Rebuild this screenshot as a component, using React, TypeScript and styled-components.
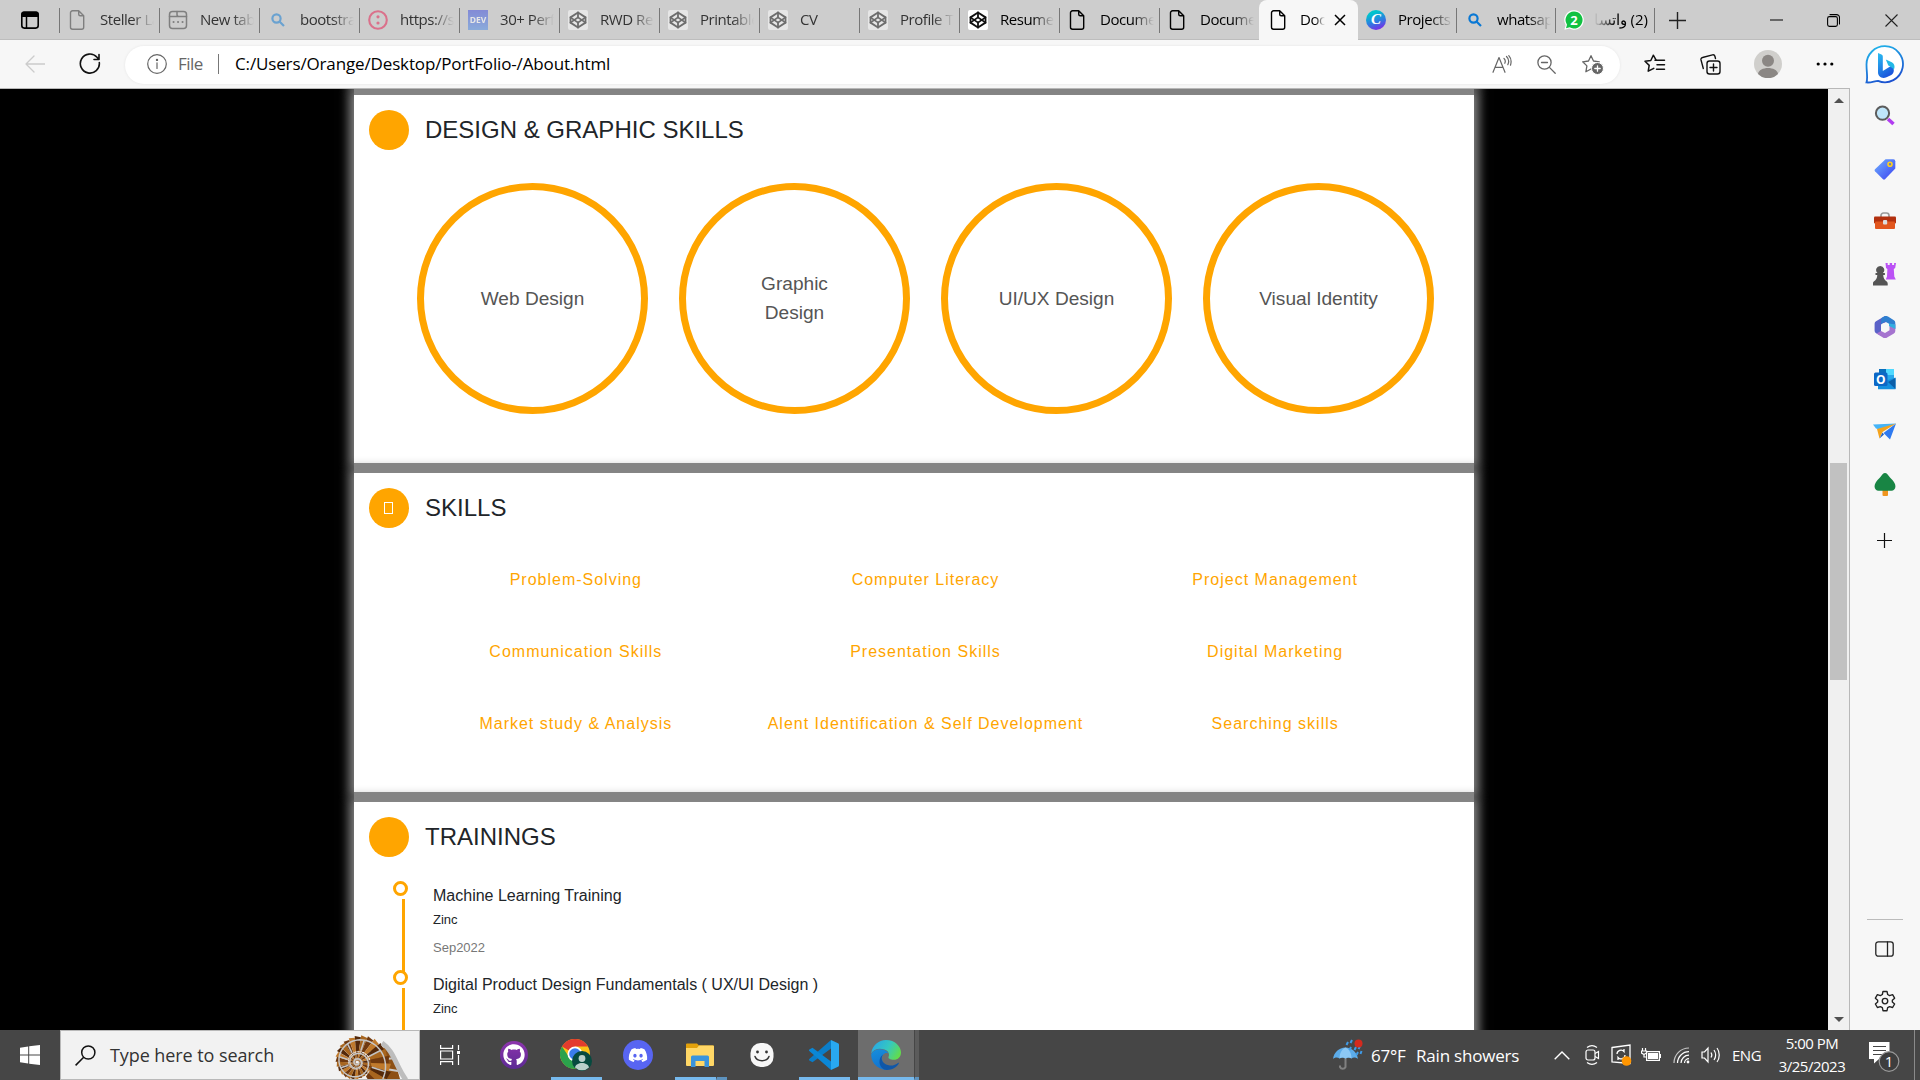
import React from "react";
import styled, { createGlobalStyle } from "styled-components";
import { Codepen } from "lucide-react";
import { FaGithub, FaDiscord } from "react-icons/fa";

const UI = `"Open Sans", "Noto Sans", sans-serif`;
const ORANGE = "#ffa500";

const Global = createGlobalStyle`
  *, *::before, *::after { box-sizing: border-box; }
  html, body { margin: 0; padding: 0; overflow: hidden; }
  body { font-family: "Liberation Sans", Arial, sans-serif; background: #000; }
  svg { display: block; flex: none; }
`;

const Screen = styled.div`
  width: 1920px;
  height: 1080px;
  display: flex;
  flex-direction: column;
  overflow: hidden;
`;

/* ---------- tab strip ---------- */
const TabStrip = styled.div`
  height: 40px;
  flex: none;
  display: flex;
  background: #cdcdcd;
  box-shadow: inset 0 -1px 0 #bdbdbd;
  font-family: ${UI};
`;
const StripLead = styled.div`
  width: 60px;
  padding-left: 20px;
  display: flex;
  align-items: center;
  border-right: 1px solid transparent;
`;
const TabBox = styled.div<{ $w: number; $active?: boolean; $dim?: boolean; $bar: boolean }>`
  width: ${(p) => p.$w}px;
  flex: none;
  display: flex;
  align-items: center;
  margin-left: ${(p) => (p.$active ? -1 : 0)}px;
  padding-left: ${(p) => (p.$active ? 10 : 8)}px;
  position: relative;
  background: ${(p) => (p.$active ? "#f7f7f7" : "transparent")};
  border-radius: 8px 8px 0 0;
  color: ${(p) => (p.$dim ? "#333" : "#000")};
  &::before {
    content: "";
    display: ${(p) => (p.$bar ? "block" : "none")};
    position: absolute;
    left: -1px;
    top: 8px;
    width: 1px;
    height: 25px;
    background: #777;
  }
`;
const Fav = styled.span<{ $dim?: boolean }>`
  width: 20px;
  height: 20px;
  flex: none;
  display: flex;
  align-items: center;
  justify-content: center;
  opacity: ${(p) => (p.$dim ? 0.5 : 1)};
`;
const TabTitle = styled.span<{ $w: number; $rtl?: boolean; $gap?: number }>`
  width: ${(p) => p.$w}px;
  margin-left: ${(p) => p.$gap ?? 12}px;
  padding-bottom: 2px;
  flex: none;
  overflow: hidden;
  white-space: nowrap;
  font-size: 15px;
  line-height: 22px;
  letter-spacing: -0.45px;
  direction: ${(p) => (p.$rtl ? "rtl" : "ltr")};
  mask-image: linear-gradient(to ${(p) => (p.$rtl ? "left" : "right")}, #000 60%, transparent 100%);
`;
const PenTile = styled.span`
  width: 20px;
  height: 20px;
  display: flex;
  align-items: center;
  justify-content: center;
  background: #fff;
  border-radius: 2px;
`;
const DevTile = styled.span`
  width: 20px;
  height: 20px;
  background: linear-gradient(#3b49df, #4a8ae8);
  color: #fff;
  font: 700 8.5px/20px ${UI};
  text-align: center;
`;
const CanvaTile = styled.span`
  width: 20px;
  height: 20px;
  border-radius: 50%;
  background: linear-gradient(160deg, #00c4cc 20%, #2b7fe0 55%, #7d2ae8 90%);
  color: #fff;
  font: italic 700 15px/19px "Liberation Serif", serif;
  text-align: center;
`;
const WindowTools = styled.div`
  margin-left: auto;
  display: flex;
  align-items: center;
`;
const Slot = styled.div<{ $w: number }>`
  width: ${(p) => p.$w}px;
  flex: none;
  display: flex;
  align-items: center;
  justify-content: center;
`;

/* ---------- toolbar ---------- */
const Toolbar = styled.div`
  height: 48px;
  flex: none;
  display: flex;
  align-items: center;
  background: #f7f7f7;
  font-family: ${UI};
`;
const Address = styled.div`
  width: 1495px;
  height: 38px;
  margin: 1px 0 0 8px;
  border-radius: 19px;
  background: #fff;
  box-shadow: 0 0 3px rgba(0, 0, 0, 0.08);
  display: flex;
  align-items: center;
  padding: 0 0 1px 22px;
`;
const Scheme = styled.span`
  width: 40px;
  margin-left: 11px;
  padding-bottom: 2px;
  font-size: 17px;
  letter-spacing: -0.5px;
  color: #666;
`;
const Divider = styled.span`
  width: 1px;
  height: 20px;
  background: #777;
`;
const Url = styled.span`
  margin-left: 16px;
  padding-bottom: 2px;
  font-size: 17px;
  letter-spacing: -0.14px;
  color: #000;
  white-space: nowrap;
`;
const AddressTools = styled.div`
  margin-left: auto;
  padding-right: 5px;
  display: flex;
`;
const BingSlot = styled.div`
  margin-left: auto;
  padding: 2px 16px 0 0;
`;

/* ---------- body ---------- */
const Middle = styled.div`
  height: 942px;
  flex: none;
  display: flex;
`;
const PageFrame = styled.div`
  width: 1850px;
  display: flex;
  border-top: 1px solid #b8b8b8;
  border-right: 1px solid #b8b8b8;
`;
const Page = styled.main`
  width: 1828px;
  height: 941px;
  overflow: hidden;
  background: #000;
  color: #212529;
`;
const Column = styled.div`
  width: 1120px;
  margin: -44px 0 0 354px;
  display: flex;
  flex-direction: column;
  gap: 10px;
  background: #808080;
`;
const Card = styled.section<{ $h: number }>`
  height: ${(p) => p.$h}px;
  flex: none;
  padding: 15px;
  background: #fff;
  box-shadow: 0 0 10px 5px #868686;
`;
const CardHead = styled.header`
  display: flex;
  align-items: center;
  gap: 16px;
  height: 40px;
`;
const Bullet = styled.span`
  width: 40px;
  height: 40px;
  border-radius: 50%;
  background: ${ORANGE};
  display: flex;
  align-items: center;
  justify-content: center;
`;
const MissingGlyph = styled.i`
  width: 9px;
  height: 12px;
  margin-right: 1px;
  border: 1px solid #fff;
`;
const Title = styled.h2`
  margin: 0;
  font-size: 24px;
  font-weight: 400;
  line-height: 40px;
`;
const Rings = styled.div`
  display: flex;
  gap: 31px;
  margin: 33px 0 0 48px;
`;
const Ring = styled.div`
  width: 231px;
  height: 231px;
  border: 7.5px solid ${ORANGE};
  border-radius: 50%;
  display: flex;
  align-items: center;
  justify-content: center;
  padding: 0 47px 1px;
  text-align: center;
  font-size: 19.1px;
  line-height: 29px;
  color: #555;
`;
const SkillGrid = styled.div`
  width: 1049px;
  margin: 16px 0 0 32px;
  display: grid;
  grid-template-columns: repeat(3, 1fr);
  grid-auto-rows: 72px;
`;
const Skill = styled.div`
  display: flex;
  align-items: center;
  justify-content: center;
  font-size: 16px;
  letter-spacing: 1px;
  color: ${ORANGE};
`;
const Timeline = styled.div`
  margin: 24px 0 0 24px;
`;
const Entry = styled.article`
  height: 89px;
  display: flex;
`;
const Rail = styled.div`
  width: 15px;
  display: flex;
  flex-direction: column;
`;
const Dot = styled.span`
  width: 15px;
  height: 15px;
  flex: none;
  border: 3px solid ${ORANGE};
  border-radius: 50%;
`;
const Line = styled.span`
  width: 3px;
  height: 73px;
  margin: 3px 0 0 9px;
  flex: none;
  background: ${ORANGE};
`;
const EntryText = styled.div`
  margin-left: 25px;
  padding-top: 5px;
`;
const EntryTitle = styled.h3`
  margin: 0;
  font-size: 16px;
  font-weight: 400;
  line-height: 20px;
`;
const EntryOrg = styled.p`
  margin: 4px 0 0;
  font-size: 13px;
  line-height: 20px;
`;
const EntryDate = styled.p`
  margin: 8px 0 0;
  font-size: 13px;
  line-height: 20px;
  color: #777;
`;

const Scrollbar = styled.div`
  width: 21px;
  display: flex;
  flex-direction: column;
  align-items: center;
  background: #f0f0f0;
`;
const Arrow = styled.i<{ $down?: boolean }>`
  width: 0;
  height: 0;
  margin-top: ${(p) => (p.$down ? "auto" : "9px")};
  margin-bottom: ${(p) => (p.$down ? "8px" : "0")};
  border: 5px solid transparent;
  border-top: ${(p) => (p.$down ? "5px solid #505050" : "none")};
  border-bottom: ${(p) => (p.$down ? "none" : "5px solid #505050")};
`;
const Thumb = styled.i`
  width: 17px;
  height: 217px;
  margin-top: 360px;
  background: #c1c1c1;
`;
const Sidebar = styled.aside`
  width: 70px;
  background: #f7f7f7;
  display: flex;
  flex-direction: column;
  align-items: center;
  padding: 2px 1px 0 0;
`;
const SideItem = styled.div<{ $h?: number }>`
  height: ${(p) => p.$h ?? 52.6}px;
  flex: none;
  display: flex;
  align-items: center;
`;
const SideRule = styled.hr`
  width: 36px;
  height: 1px;
  margin: auto 0 3px;
  border: 0;
  background: #bbb;
`;

/* ---------- taskbar ---------- */
const Taskbar = styled.footer`
  height: 50px;
  flex: none;
  display: flex;
  background: #464646;
  color: #fff;
  font-family: ${UI};
`;
const SearchBox = styled.div`
  width: 360px;
  display: flex;
  align-items: center;
  padding-left: 14px;
  background: #f2f2f2;
  border: 1px solid #b9b9b9;
  color: #333;
  overflow: hidden;
`;
const SearchText = styled.span`
  width: 165px;
  margin-left: 14px;
  font-size: 18px;
  letter-spacing: -0.08px;
  white-space: nowrap;
`;
const Shell = styled.div`
  margin-left: 57px;
  align-self: flex-start;
`;
const AppSlot = styled.div<{ $shift?: number }>`
  width: 62px;
  margin-left: ${(p) => p.$shift ?? 0}px;
  display: flex;
  justify-content: center;
  align-items: stretch;
`;
const AppInner = styled.div<{ $running?: boolean; $active?: boolean; $wide?: number }>`
  width: ${(p) => (p.$active ? 56 : 51)}px;
  display: flex;
  align-items: center;
  justify-content: center;
  background: ${(p) => (p.$active ? "#6d6d6d" : "transparent")};
  border-bottom: 3px solid ${(p) => (p.$running ? "#76b9ed" : "transparent")};
  padding-top: 3px;
`;
/* Sliver beside an app that has more than one window open. */
const Stack = styled.div<{ $bg: string; $over: number; $out: number }>`
  width: ${(p) => p.$over + p.$out}px;
  margin: 0 ${(p) => -p.$out}px 0 ${(p) => -p.$over}px;
  background: ${(p) => p.$bg};
  border-left: 1px solid #464646;
  border-bottom: 3px solid #5d93bf;
`;
const Disc = styled.span<{ $c: string; $s: number }>`
  width: ${(p) => p.$s}px;
  height: ${(p) => p.$s}px;
  border-radius: 50%;
  background: ${(p) => p.$c};
  display: flex;
  align-items: center;
  justify-content: center;
`;
const Tray = styled.div`
  margin-left: auto;
  display: flex;
  align-items: center;
`;
const Weather = styled.div`
  width: 214px;
  display: flex;
  align-items: center;
  font-size: 17px;
  letter-spacing: -0.2px;
  white-space: nowrap;
`;
const Degrees = styled.span`
  width: 45px;
  margin-left: 8px;
`;
const Lang = styled.span`
  width: 46px;
  padding-left: 6px;
  font-size: 15px;
  letter-spacing: -0.5px;
`;
const Clock = styled.div`
  width: 80px;
  text-align: center;
  font-size: 15px;
  line-height: 23px;
  letter-spacing: -0.5px;
  padding-bottom: 1px;
`;
const Notice = styled.div`
  width: 62px;
  padding-left: 17px;
`;
const DeskEdge = styled.span`
  width: 6px;
  height: 50px;
  border-left: 1px solid #8a8a8a;
`;

/* ---------- icons ---------- */
const line = { fill: "none", stroke: "currentColor", strokeLinecap: "round", strokeLinejoin: "round" } as const;

const DocIcon = () => (
  <svg width="20" height="20" viewBox="0 0 20 20" {...line} strokeWidth="1.4">
    <path d="M4.500 .8h6.200l5 5v11.400a2 2 0 0 1-2 2H4.500a2 2 0 0 1-2-2V2.800a2 2 0 0 1 2-2z M10.700 .8v3.500a1.500 1.500 0 0 0 1.500 1.500h3.500" />
  </svg>
);
const NewTabIcon = () => (
  <svg width="20" height="20" viewBox="0 0 20 20" {...line} strokeWidth="1.5">
    <rect x="1.500" y="1.500" width="17" height="17" rx="3" />
    <path d="M1.500 6.500h17M9 1.500v3a2 2 0 0 0 2 2" />
    <path d="M5.500 12h.1M10 12h.1M14.500 12h.1" strokeWidth="2" />
  </svg>
);
const BingSearch = ({ c }: { c: string }) => (
  <svg width="14" height="14" viewBox="0 0 14 14" fill="none" stroke={c} strokeWidth="2.200">
    <circle cx="5.500" cy="5.500" r="4.100" />
    <path d="M8.500 8.500l4.500 4.500" />
  </svg>
);
const RedRing = () => (
  <svg width="20" height="20" viewBox="0 0 20 20">
    <circle cx="10" cy="10" r="8.800" fill="none" stroke="#e8174b" strokeWidth="2.100" />
    <circle cx="10" cy="6.800" r="1.600" fill="#e8174b" />
    <circle cx="10" cy="13" r="1.600" fill="#e8174b" />
  </svg>
);
const Pen = () => (
  <PenTile>
    <Codepen size={18} strokeWidth={2.4} color="#111" />
  </PenTile>
);
const ChatBadge = () => (
  <svg width="20" height="20" viewBox="0 0 20 20">
    <path d="M10 .3a9.700 9.700 0 1 1-4.600 18.200L.4 19.800l1.300-4.800A9.700 9.700 0 0 1 10 .3z" fill="#fff" />
    <path d="M10 1.500a8.500 8.500 0 1 1-4.300 15.800L2 18.300l1-3.600A8.500 8.500 0 0 1 10 1.500z" fill="#11c142" />
    <text x="10" y="15" textAnchor="middle" fontFamily="Open Sans, sans-serif" fontWeight="700" fontSize="13" fill="#fff">2</text>
  </svg>
);
const Star = "M10 1.700l2.500 5.300 5.800.8-4.200 4.100 1 5.800L10 15l-5.100 2.700 1-5.800L1.700 7.800l5.800-.8z";

const SideSearch = () => (
  <svg width="22" height="22" viewBox="0 0 22 22">
    <path d="M14 14l5.500 5" stroke="#b13cf0" strokeWidth="3.600" />
    <circle cx="8.500" cy="8.200" r="6.600" fill="#bfe6fb" stroke="#5c5c5c" strokeWidth="2" />
  </svg>
);
const SideTag = () => (
  <svg width="22" height="22" viewBox="0 0 22 22">
    <defs><linearGradient id="tag" x1="0" y1="0" x2="1" y2="1"><stop stopColor="#6fb1ff" /><stop offset="1" stopColor="#3b3ff0" /></linearGradient></defs>
    <path d="M11.500 1.200h7.800a2 2 0 0 1 2 2v7.300L11 21.200a1.500 1.500 0 0 1-2 0L1 13.200a1.500 1.500 0 0 1 0-2z" fill="url(#tag)" />
    <circle cx="16" cy="6.300" r="2" fill="#6b7fb5" stroke="#ffcf1c" strokeWidth="1.600" />
  </svg>
);
const SideBox = () => (
  <svg width="22" height="20" viewBox="0 0 22 20">
    <path d="M7 6V4.500A2.500 2.500 0 0 1 9.500 2h3A2.500 2.500 0 0 1 15 4.500V6" fill="none" stroke="#999" strokeWidth="1.700" />
    <rect y="5.500" width="22" height="7" rx="1" fill="#b2300e" />
    <rect x="1" y="10.500" width="20" height="7.500" rx="1" fill="#e2561d" />
    <rect x="9" y="9" width="4.200" height="4.500" rx="1" fill="#ddd" />
  </svg>
);
const SideChess = () => (
  <svg width="23" height="23" viewBox="0 0 23 23">
    <path d="M12.500 0h2.200v2h2V0h2.400v2h2V0H23l-.8 5-1.400 1 .5 7.500 1.500 3h-10l1.200-3 .4-7.500-1.400-1z" fill="#bb52f5" />
    <path d="M7.200 3a4 4 0 0 1 2.700 7h2v2h-1.700c.2 3 1.200 5 3.500 6.500.9.600 1.300 2.500.9 4H0c-.5-1.500 0-3.400.8-4C3.200 17 4.200 15 4.300 12H2.500v-2h2a4 4 0 0 1 2.700-7z" fill="#555" />
  </svg>
);
const SideM365 = () => (
  <svg width="22" height="22" viewBox="0 0 22 22">
    <path d="M11 0l-9 5.200A3 3 0 0 0 .6 7.700v7a3 3 0 0 0 1.500 2.500L7 19.800V8.500L14 5z" fill="#5a62c8" />
    <path d="M11 0c1-.3 2 0 3 .6l5.900 3.700a3 3 0 0 1 1.400 2.500v6L15 9.500V7.800L11 5.500 7 8 7.500 2z" fill="#2f7fd0" />
    <path d="M21.300 8v7a3 3 0 0 1-1.400 2.400l-7.200 4.300a3.300 3.300 0 0 1-3.400 0L2.500 17.500 7 15l4 2 4.500-2.700V10z" fill="#a574cf" />
    <path d="M15 7.500l6.300 1v4.500L15 10z" fill="#31aee0" />
    <circle cx="11" cy="11" r="4" fill="#f7f7f7" />
  </svg>
);
const SideOutlook = () => (
  <svg width="22" height="22" viewBox="0 0 22 22">
    <path d="M5 1h15v18H5z" fill="#28a8ea" />
    <path d="M12 1h8v6h-8z" fill="#50d9ff" />
    <path d="M5 1h7v6H5z" fill="#0a6fbd" />
    <path d="M4 21.300V16l10-4 7.500-2.500v11.800z" fill="#1490df" />
    <path d="M21.500 10v11L14 14z" fill="#0b5ea8" />
    <rect y="4.500" width="13.500" height="13.500" rx="1.500" fill="#0c68c6" />
    <text x="6.700" y="15.500" textAnchor="middle" fontFamily="Open Sans, sans-serif" fontWeight="700" fontSize="12" fill="#fff">O</text>
  </svg>
);
const SidePlane = () => (
  <svg width="23" height="17" viewBox="0 0 23 17">
    <path d="M0 1.500L23 .5 10 7.500 3 5.500z" fill="#45b4f7" />
    <path d="M23 .5L10.500 10l6.500 6.500z" fill="#2f7af0" />
    <path d="M23 .5L4 6l2.500 9.500L9.500 9z" fill="#f5a31c" />
    <path d="M9.500 9.500L6.500 15.500l4.500-4z" fill="#1d5fc4" />
  </svg>
);
const SideTree = () => (
  <svg width="22" height="23" viewBox="0 0 22 23">
    <rect x="8.500" y="15" width="5.500" height="8" rx="1" fill="#f0951e" />
    <path d="M11 0c1.800 0 3 2 5 4.500 1.500 1.800 3.500 3.300 4.500 5.500 2.300 4.500 0 7.700-3 7.700H4.500c-3 0-5.300-3.200-3-7.700 1-2.200 3-3.700 4.500-5.500C8 2 9.200 0 11 0z" fill="#188544" />
  </svg>
);
const BingLogo = () => (
  <svg width="39" height="40" viewBox="0 0 39 40">
    <defs>
      <linearGradient id="bub" x1="0.2" y1="0" x2="0.6" y2="1"><stop stopColor="#21b5ea" /><stop offset="1" stopColor="#1b50cf" /></linearGradient>
      <linearGradient id="bb" x1="0" y1="0" x2="0.5" y2="1"><stop stopColor="#2ac0f2" /><stop offset="1" stopColor="#1a55dc" /></linearGradient>
    </defs>
    <path d="M20 1.200a18 18 0 1 1-7 34.600c-3.500 0-6.500 2.200-11.500 1.600C3 33.500 1.500 27 1.500 19.500A18.300 18.300 0 0 1 20 1.200z" fill="#fff" stroke="url(#bub)" strokeWidth="1.800" />
    <path d="M13 8l3.500 1.600a2 2 0 0 1 1.300 1.900V26l8.500-5.200c3.800 3 3 7.500 0 9.300L21.500 32.300c-4.500 2-8.500-.8-8.500-5z" fill="url(#bb)" />
    <path d="M20.800 14.500l6 2.800c3 1.700 3.300 5.200 2 7.200-1.500-2-3.500-3-5.500-4z" fill="#23b8e6" />
  </svg>
);

/* Spiral staircase drawn from wedges whose radius grows with the angle. */
const SpiralArt = () => {
  const cx = 25;
  const cy = 31.5;
  const radius = (a: number) => 2.1 * Math.pow(2.5, a / (2 * Math.PI));
  const at = (a: number, k = 1) => {
    const r = radius(a) * k;
    return `${(cx + r * Math.cos(a)).toFixed(2)},${(cy + r * Math.sin(a)).toFixed(2)}`;
  };
  const step = Math.PI / 13;
  const end = 6.3 * Math.PI;
  const shades = ["#a8661f", "#70390f", "#c07a2c", "#54290a"];
  const wedges = [];
  for (let a = 1, i = 0; a < end; a += step, i++) {
    wedges.push(
      <polygon key={i} fill={shades[i % 4]} points={`${at(a, 1.03)} ${at(a + step, 0.96)} ${at(a + step, 0.44)} ${at(a, 0.42)}`} />
    );
  }
  const rail = [];
  for (let a = 0; a < end + 0.3; a += 0.1) rail.push(at(a, 0.86));
  return (
    <svg width="82" height="48" viewBox="0 0 82 48">
      <path d="M40 12L60 20 68 48H36z" fill="#8d5015" />
      <path d="M44 29l20-2M42 36l24 4M37 40l12 8" stroke="#c9c9c9" strokeWidth="2.200" />
      {wedges}
      {[4.9, 5.1, 5.35, 5.6, 5.85, 6.1].map((k) => (
        <path key={k} d={`M${at(k * Math.PI, 0.45)} L${at(k * Math.PI, 0.86)}`} stroke="#c4c4c4" strokeWidth="1.500" />
      ))}
      <polyline points={rail.join(" ")} fill="none" stroke="#c6c6c6" strokeWidth="1.500" />
      <path d="M50 12C62 20 64 36 74 49" fill="none" stroke="#bdbdbd" strokeWidth="5" />
    </svg>
  );
};

const ChromeLogo = () => (
  <svg width="32" height="32" viewBox="0 0 32 32">
    <circle cx="15" cy="15" r="15" fill="#fbc116" />
    <path d="M15 15L2 7.500A15 15 0 0 1 28 7.500H15z" fill="#e33b2e" />
    <path d="M2 7.500A15 15 0 0 0 15 30l7-11.500L9 18z" fill="#2ba24c" />
    <circle cx="15" cy="15" r="7.500" fill="#fff" />
    <circle cx="15" cy="15" r="5.800" fill="#3a7cec" />
    <circle cx="22" cy="22" r="10" fill="#064a3f" />
    <circle cx="22" cy="19.500" r="3.400" fill="#b9d0cb" />
    <path d="M15 28.500c1-6 13-6 14 0a10 10 0 0 1-14 0z" fill="#b9d0cb" />
  </svg>
);
const FolderLogo = () => (
  <svg width="28" height="24" viewBox="0 0 28 24">
    <path d="M0 1.500A1 1 0 0 1 1 .5h10l2 2h14a1 1 0 0 1 1 1V8H0z" fill="#e3a10a" />
    <path d="M0 5h11l2-2.500h14a1 1 0 0 1 1 1V22a1 1 0 0 1-1 1H1a1 1 0 0 1-1-1z" fill="#ffd766" />
    <path d="M5 24V14a1.500 1.500 0 0 1 1.500-1.500h15A1.500 1.500 0 0 1 23 14v10h-4.500v-6h-9v6z" fill="#3a94dc" />
  </svg>
);
const SmileLogo = () => (
  <svg width="24" height="26" viewBox="0 0 24 26">
    <rect x=".5" y="1" width="23" height="24" rx="10" fill="#f7f7f7" />
    <circle cx="7.500" cy="10" r="1.400" fill="#333" />
    <circle cx="16.500" cy="10" r="1.400" fill="#333" />
    <path d="M5 14.500c2 5.500 12 5.500 14 0" fill="none" stroke="#333" strokeWidth="1.500" strokeLinecap="round" />
  </svg>
);
const CodeLogo = () => (
  <svg width="30" height="30" viewBox="0 0 30 30">
    <path d="M22 0v8.500L3.500 22.300.3 20.600c-.5-.6-.5-1.200 0-1.700z" fill="#0a7dc8" />
    <path d="M22 30v-8.500L3.500 7.700.3 9.400c-.5.600-.5 1.200 0 1.700z" fill="#0a87d6" />
    <path d="M22 0l7 3.200a1.600 1.600 0 0 1 1 1.500v20.600a1.600 1.600 0 0 1-1 1.500L22 30z" fill="#29a8f0" />
  </svg>
);
const EdgeLogo = () => (
  <svg width="30" height="30" viewBox="0 0 30 30">
    <defs>
      <linearGradient id="eg" x1="0" y1="0.2" x2="1" y2="0.6"><stop stopColor="#27a5e8" /><stop offset="0.55" stopColor="#35c8c0" /><stop offset="1" stopColor="#62dc4c" /></linearGradient>
      <linearGradient id="eb" x1="0" y1="0" x2="0.3" y2="1"><stop stopColor="#178fdc" /><stop offset="1" stopColor="#1273cf" /></linearGradient>
    </defs>
    <path d="M.2 13.500C1.200 5.500 7.500 0 15 0c9 0 15 6.500 15 12.500 0 4.500-3.200 7.300-7 7.300-4 0-6-1.500-5.500-2.700 1-1.700 1-6-4-7.600C8 7.800 2.500 9 .2 13.500z" fill="url(#eg)" />
    <path d="M.2 14.500C2 9.500 8.500 8 13.500 10c2 .8 3.300 2.200 3.700 3.500-3-1.500-6.200 1-6.200 5 0 5 4 9 8 10.800A15 15 0 0 1 .2 14.500z" fill="url(#eb)" />
    <path d="M12 14.500c-3.500 5 .5 10.500 7 11 3.300.2 6-1 8-2.600.6-.5 1.200 0 .8.700C25.500 27.500 21 30 16 30 8 29.500 6 19 12 14.500z" fill="#1057a8" />
  </svg>
);
const Umbrella = () => (
  <svg width="30" height="32" viewBox="0 0 30 32">
    <path d="M12.500 9v19a3 3 0 0 1-5.500 0v-1.500" fill="none" stroke="#808080" strokeWidth="2" />
    <path d="M0 20C1 13 6 9 12.500 8.500 19 9 24 13 25 20c-2-2-5-2-6.500-.5-2-1.500-4-1.500-6 0-2-1.500-4-1.500-6 0C4.500 18 2 18 0 20z" fill="#5cacea" />
    <path d="M12.500 8.500c-4 2-6 6-6 11 2-1.500 4-1.500 6 0 2-1.500 4-1.500 6 0 0-5-2-9-6-11z" fill="#8cc8f5" />
    <path d="M15 3l-1.500 3M19 1l-1.500 3M18 8l-1.500 3M23 8l-1.500 3M27 7l-1.500 3M25 13l-1.500 3M28.500 12l-1 3" stroke="#3f9be8" strokeWidth="2" />
    <circle cx="25.500" cy="4.500" r="4" fill="#d42a1e" />
  </svg>
);

type Tab = { icon: React.ReactNode; text: string; dim?: boolean; active?: boolean; w?: number; bar?: boolean; rtl?: boolean; gap?: number };
const tabs: Tab[] = [
  { icon: <DocIcon />, text: "Steller La", dim: true },
  { icon: <NewTabIcon />, text: "New tab", dim: true },
  { icon: <BingSearch c="#0a78d4" />, text: "bootstra", dim: true },
  { icon: <RedRing />, text: "https://s", dim: true },
  { icon: <DevTile>DEV</DevTile>, text: "30+ Perf", dim: true },
  { icon: <Pen />, text: "RWD Re", dim: true },
  { icon: <Pen />, text: "Printable", dim: true },
  { icon: <Pen />, text: "CV", dim: true },
  { icon: <Pen />, text: "Profile Te", dim: true },
  { icon: <Pen />, text: "Resume" },
  { icon: <DocIcon />, text: "Docume" },
  { icon: <DocIcon />, text: "Docume" },
  { icon: <DocIcon />, text: "Doc", active: true, bar: false, w: 99, gap: 11 },
  { icon: <CanvaTile>C</CanvaTile>, text: "Projects", w: 99, bar: false },
  { icon: <BingSearch c="#0a78d4" />, text: "whatsap", w: 99 },
  { icon: <ChatBadge />, text: "(2) واتسا", w: 99, rtl: true, gap: 10 },
];

const skills = [
  "Problem-Solving", "Computer Literacy", "Project Management",
  "Communication Skills", "Presentation Skills", "Digital Marketing",
  "Market study & Analysis", "Alent Identification & Self Development", "Searching skills",
];
const trainings = [
  { title: "Machine Learning Training", org: "Zinc", date: "Sep2022" },
  { title: "Digital Product Design Fundamentals ( UX/UI Design )", org: "Zinc", date: "" },
];

const Head = ({ title, children }: { title: string; children?: React.ReactNode }) => (
  <CardHead>
    <Bullet>{children}</Bullet>
    <Title>{title}</Title>
  </CardHead>
);

export default function App() {
  return (
    <Screen>
      <Global />
      <TabStrip>
        <StripLead>
          <svg width="20" height="20" viewBox="0 0 20 20">
            <rect x="1.800" y="2.300" width="16.400" height="15.800" rx="2.500" {...line} stroke="#000" strokeWidth="1.600" />
            <path d="M1.500 3.500a2 2 0 0 1 2-2h13a2 2 0 0 1 2 2V7h-17z" />
            <path d="M6.500 6v12" stroke="#000" strokeWidth="1.500" />
          </svg>
        </StripLead>
        {tabs.map((t, i) => (
          <TabBox key={i} $w={t.w ?? 100} $active={t.active} $dim={t.dim} $bar={t.bar !== false}>
            <Fav $dim={t.dim}>{t.icon}</Fav>
            <TabTitle $w={t.active ? 25 : 54} $rtl={t.rtl} $gap={t.gap}>{t.text}</TabTitle>
            {t.active && (
              <Slot $w={30}>
                <svg width="12" height="12" viewBox="0 0 12 12" stroke="#000" strokeWidth="1.500"><path d="M1 1l10 10M11 1L1 11" /></svg>
              </Slot>
            )}
          </TabBox>
        ))}
        <TabBox $w={46} $bar>
          <Slot $w={28}>
            <svg width="17" height="17" viewBox="0 0 17 17" stroke="#222" strokeWidth="1.400"><path d="M8.500 0v17M0 8.500h17" /></svg>
          </Slot>
        </TabBox>
        <WindowTools>
          <Slot $w={57}><svg width="13" height="2" viewBox="0 0 13 2"><path d="M0 .5h13v1H0z" /></svg></Slot>
          <Slot $w={57}>
            <svg width="13" height="13" viewBox="0 0 13 13" {...line} stroke="#000" strokeWidth="1.100">
              <rect x=".6" y="2.600" width="9.800" height="9.800" rx="1.800" />
              <path d="M3 .6h6.500a3 3 0 0 1 3 3V10" />
            </svg>
          </Slot>
          <Slot $w={58}><svg width="13" height="13" viewBox="0 0 13 13" stroke="#222" strokeWidth="1.100"><path d="M.5 .5l12 12M12.500 .5l-12 12" /></svg></Slot>
        </WindowTools>
      </TabStrip>

      <Toolbar>
        <Slot $w={70}>
          <svg width="20" height="18" viewBox="0 0 20 18" {...line} stroke="#ccc" strokeWidth="1.300"><path d="M20 9H1M9 1L1 9l8 8" /></svg>
        </Slot>
        <Slot $w={40}>
          <svg width="22" height="22" viewBox="0 0 22 22" {...line} stroke="#111" strokeWidth="1.600"><path d="M20.300 9.500A9.500 9.500 0 1 1 18 4.300L20 6.500M20 1.500v5h-5" /></svg>
        </Slot>
        <Slot $w={7} />
        <Address>
          <svg width="20" height="20" viewBox="0 0 20 20" {...line} stroke="#666" strokeWidth="1.200"><circle cx="10" cy="10" r="9.300" /><path d="M10 8.800v5.700" /><circle cx="10" cy="5.900" r=".6" fill="#666" /></svg>
          <Scheme>File</Scheme>
          <Divider />
          <Url>C:/Users/Orange/Desktop/PortFolio-/About.html</Url>
          <AddressTools>
            <Slot $w={44}>
              <svg width="20" height="18" viewBox="0 0 20 18" {...line} stroke="#666" strokeWidth="1.200"><path d="M1 17.300L7 2.500l6 14.800M3 12.300h8" /><path d="M12 3.500c1.300 1.200 1.500 3.200.8 4.800M14.500 1.500c2.300 2.200 2.600 5.500 1.300 8.200M16.800 .7c2.300 2.500 2.800 6 1.700 9.500" /></svg>
            </Slot>
            <Slot $w={45}>
              <svg width="19" height="19" viewBox="0 0 19 19" {...line} stroke="#666" strokeWidth="1.300"><circle cx="7.500" cy="7.500" r="6.600" /><path d="M12.400 12.400l5.800 5.800M4.500 7.500h6" /></svg>
            </Slot>
            <Slot $w={46}>
              <svg width="23" height="21" viewBox="0 0 23 21" {...line} stroke="#666" strokeWidth="1.300"><path d={Star} /><circle cx="16.500" cy="14.500" r="6" fill="#666" stroke="#fff" strokeWidth="1" /><path d="M16.500 11.800v5.400M13.800 14.500h5.400" stroke="#fff" /></svg>
            </Slot>
          </AddressTools>
        </Address>
        <Slot $w={70}>
          <svg width="22" height="20" viewBox="0 0 22 20" {...line} stroke="#111" strokeWidth="1.500"><path d="M11 6.300h9.500M13 10.700h7.500M12.500 15.200h8" /><path d="M12 5.800L9.300 1.200 6.800 6.500l-5.800.8 4.200 4.100-1 5.800 5.600-2.900" /></svg>
        </Slot>
        <Slot $w={40}>
          <svg width="21" height="21" viewBox="0 0 21 21" {...line} stroke="#111" strokeWidth="1.400"><rect x="7" y="7" width="13" height="13" rx="2.500" /><path d="M13.500 10v7M10 13.500h7M15.500 4.500l-.6-2.200a2 2 0 0 0-2.400-1.400L2.500 3.500A2 2 0 0 0 1 5.900l2.300 8.600" /></svg>
        </Slot>
        <Slot $w={76}>
          <svg width="28" height="28" viewBox="0 0 28 28"><circle cx="14" cy="14" r="14" fill="#d0cfcc" /><circle cx="14" cy="10.700" r="6" fill="#8b8784" /><path d="M4 24c1-8 19-8 20 0a14 14 0 0 1-20 0z" fill="#8b8784" /></svg>
        </Slot>
        <Slot $w={38}>
          <svg width="18" height="4" viewBox="0 0 18 4"><circle cx="2.200" cy="2" r="1.600" /><circle cx="9" cy="2" r="1.600" /><circle cx="15.800" cy="2" r="1.600" /></svg>
        </Slot>
        <BingSlot><BingLogo /></BingSlot>
      </Toolbar>

      <Middle>
        <PageFrame>
          <Page>
            <Column>
              <Card $h={40} />
              <Card $h={368}>
                <Head title="DESIGN & GRAPHIC SKILLS" />
                <Rings>
                  {["Web Design", "Graphic Design", "UI/UX Design", "Visual Identity"].map((s) => (
                    <Ring key={s}>{s}</Ring>
                  ))}
                </Rings>
              </Card>
              <Card $h={319}>
                <Head title="SKILLS"><MissingGlyph /></Head>
                <SkillGrid>{skills.map((s) => <Skill key={s}>{s}</Skill>)}</SkillGrid>
              </Card>
              <Card $h={300}>
                <Head title="TRAININGS" />
                <Timeline>
                  {trainings.map((t) => (
                    <Entry key={t.title}>
                      <Rail><Dot /><Line /></Rail>
                      <EntryText>
                        <EntryTitle>{t.title}</EntryTitle>
                        <EntryOrg>{t.org}</EntryOrg>
                        <EntryDate>{t.date}</EntryDate>
                      </EntryText>
                    </Entry>
                  ))}
                </Timeline>
              </Card>
            </Column>
          </Page>
          <Scrollbar>
            <Arrow />
            <Thumb />
            <Arrow $down />
          </Scrollbar>
        </PageFrame>
        <Sidebar>
          <SideItem><SideSearch /></SideItem>
          <SideItem><SideTag /></SideItem>
          <SideItem><SideBox /></SideItem>
          <SideItem><SideChess /></SideItem>
          <SideItem><SideM365 /></SideItem>
          <SideItem><SideOutlook /></SideItem>
          <SideItem><SidePlane /></SideItem>
          <SideItem><SideTree /></SideItem>
          <SideItem $h={60}>
            <svg width="15" height="15" viewBox="0 0 15 15" stroke="#111" strokeWidth="1.200"><path d="M7.500 0v15M0 7.500h15" /></svg>
          </SideItem>
          <SideRule />
          <SideItem $h={51}>
            <svg width="19" height="16" viewBox="0 0 19 16" {...line} stroke="#222" strokeWidth="1.300"><rect x=".8" y=".8" width="17.400" height="14.400" rx="2.500" /><path d="M12.500 1v14" /></svg>
          </SideItem>
          <SideItem $h={56}>
            <svg width="22" height="24" viewBox="0 0 24 26" {...line} stroke="#222" strokeWidth="1.500"><circle cx="12" cy="12" r="3" /><path d="M9.800 1.500h4.400l.7 3.300 2.100 1.200 3.300-1 2.200 3.800-2.500 2.200v2l2.500 2.200-2.200 3.800-3.300-1-2.100 1.200-.7 3.300H9.800l-.7-3.300L7 18l-3.300 1-2.200-3.800L4 13v-2L1.500 8.800 3.700 5 7 6l2.100-1.200z" /></svg>
          </SideItem>
        </Sidebar>
      </Middle>

      <Taskbar>
        <Slot $w={60}>
          <svg width="20" height="20" viewBox="0 0 20 20" fill="#fff"><path d="M0 2.700L8.200 1.500v8H0zM9.200 1.300L20 0v9.500H9.200zM0 10.500h8.200v8L0 17.300zM9.200 10.500H20V20L9.200 18.700z" /></svg>
        </Slot>
        <SearchBox>
          <svg width="21" height="21" viewBox="0 0 21 21" fill="none" stroke="#111" strokeWidth="1.500"><circle cx="13.300" cy="7.500" r="6.600" /><path d="M8.700 12.200L.6 20.400" /></svg>
          <SearchText>Type here to search</SearchText>
          <Shell><SpiralArt /></Shell>
        </SearchBox>
        <Slot $w={60}>
          <svg width="20" height="20" viewBox="0 0 20 20" fill="none" stroke="#fff" strokeWidth="1.200"><path d="M.6 0v3.400h12V0M.6 20v-3.400h12V20M.6 6h12v8H.6zM18.500 0v5M18.500 10v10" /><path d="M17 6h3v3h-3z" fill="#fff" stroke="none" /></svg>
        </Slot>
        <Slot $w={3} />
        <AppSlot><AppInner><Disc $c="linear-gradient(#8d35ad,#5c2a94)" $s={28}><FaGithub size={22} color="#fff" /></Disc></AppInner></AppSlot>
        <AppSlot><AppInner $running><ChromeLogo /></AppInner></AppSlot>
        <AppSlot><AppInner><Disc $c="#5865f2" $s={30}><FaDiscord size={20} color="#fff" /></Disc></AppInner></AppSlot>
        <AppSlot><AppInner $running><FolderLogo /></AppInner><Stack $bg="transparent" $over={10} $out={1} /></AppSlot>
        <AppSlot><AppInner><SmileLogo /></AppInner></AppSlot>
        <AppSlot><AppInner $running><CodeLogo /></AppInner></AppSlot>
        <AppSlot><AppInner $running $active><EdgeLogo /></AppInner><Stack $bg="#5b5b5b" $over={0} $out={5} /></AppSlot>

        <Tray>
          <Weather>
            <Umbrella />
            <Degrees>67°F</Degrees>
            <span>Rain showers</span>
          </Weather>
          <Slot $w={30}><svg width="16" height="9" viewBox="0 0 16 9" fill="none" stroke="#fff" strokeWidth="1.400"><path d="M.7 8.300L8 1l7.300 7.300" /></svg></Slot>
          <Slot $w={31}>
            <svg width="16" height="20" viewBox="0 0 16 20" fill="none" stroke="#fff" strokeWidth="1.200"><rect x="1" y="5" width="9" height="10" rx="2" /><path d="M10 8.500l3.500-2v7l-3.500-2M2 2.500c3-2.200 7-2.200 10 0M2 17.500c3 2.200 7 2.200 10 0" /></svg>
          </Slot>
          <Slot $w={27}>
            <svg width="21" height="22" viewBox="0 0 21 22" fill="none" stroke="#fff" strokeWidth="1.300"><path d="M1 3.500L19 1v18.500L1 18z" /><path d="M6 10a4 4 0 0 1 7-2.500V5M14 11a4 4 0 0 1-7 2.500V16" /><circle cx="15.500" cy="17" r="4.800" fill="#ff9500" stroke="none" /></svg>
          </Slot>
          <Slot $w={32}>
            <svg width="20" height="14" viewBox="0 0 20 14" fill="none" stroke="#fff" strokeWidth="1.200"><rect x="5.600" y="3.600" width="12.800" height="8.800" /><path d="M7 5h10v6H7zM18.500 6H20v4h-1.500z" fill="#fff" stroke="none" /><path d="M1.500 0v2.500M4.500 0v2.500M.5 3h5v2L3 6.500.5 5zM3 6.500V9h2.500" /></svg>
          </Slot>
          <Slot $w={29}>
            <svg width="17" height="17" viewBox="0 0 17 17" fill="none" stroke="#fff" strokeWidth="1.200"><path d="M1 16A15 15 0 0 1 16 1" opacity=".7" /><path d="M4.500 16A11.500 11.500 0 0 1 16 4.700M8 16a8 8 0 0 1 8-7.800M11.500 16a4.500 4.500 0 0 1 4.500-4.300" /><circle cx="15" cy="15" r="1.400" fill="#fff" stroke="none" /></svg>
          </Slot>
          <Slot $w={30}>
            <svg width="20" height="18" viewBox="0 0 20 18" fill="none" stroke="#fff" strokeWidth="1.200"><path d="M1 6h2.500L7 2v14l-3.500-4H1z" /><path d="M10 6.500c1 1.500 1 3.500 0 5M13 4c2 3 2 7 0 10M16 2c3 4 3 10 0 14" /></svg>
          </Slot>
          <Lang>ENG</Lang>
          <Clock>
            <div>5:00 PM</div>
            <div>3/25/2023</div>
          </Clock>
          <Notice>
            <svg width="32" height="34" viewBox="0 0 32 34"><path d="M0 4h20.500v17H10l-5 4.500V21H0z" fill="#fff" /><path d="M4 8.500h13M4 12.500h13M4 16.500h9" stroke="#464646" strokeWidth="1.200" /><circle cx="20" cy="23.500" r="9.800" fill="#3d3d3d" stroke="#999" strokeWidth="1.200" /><text x="20" y="29" textAnchor="middle" fontFamily="Open Sans, sans-serif" fontSize="15" fill="#fff">1</text></svg>
          </Notice>
          <DeskEdge />
        </Tray>
      </Taskbar>
    </Screen>
  );
}
